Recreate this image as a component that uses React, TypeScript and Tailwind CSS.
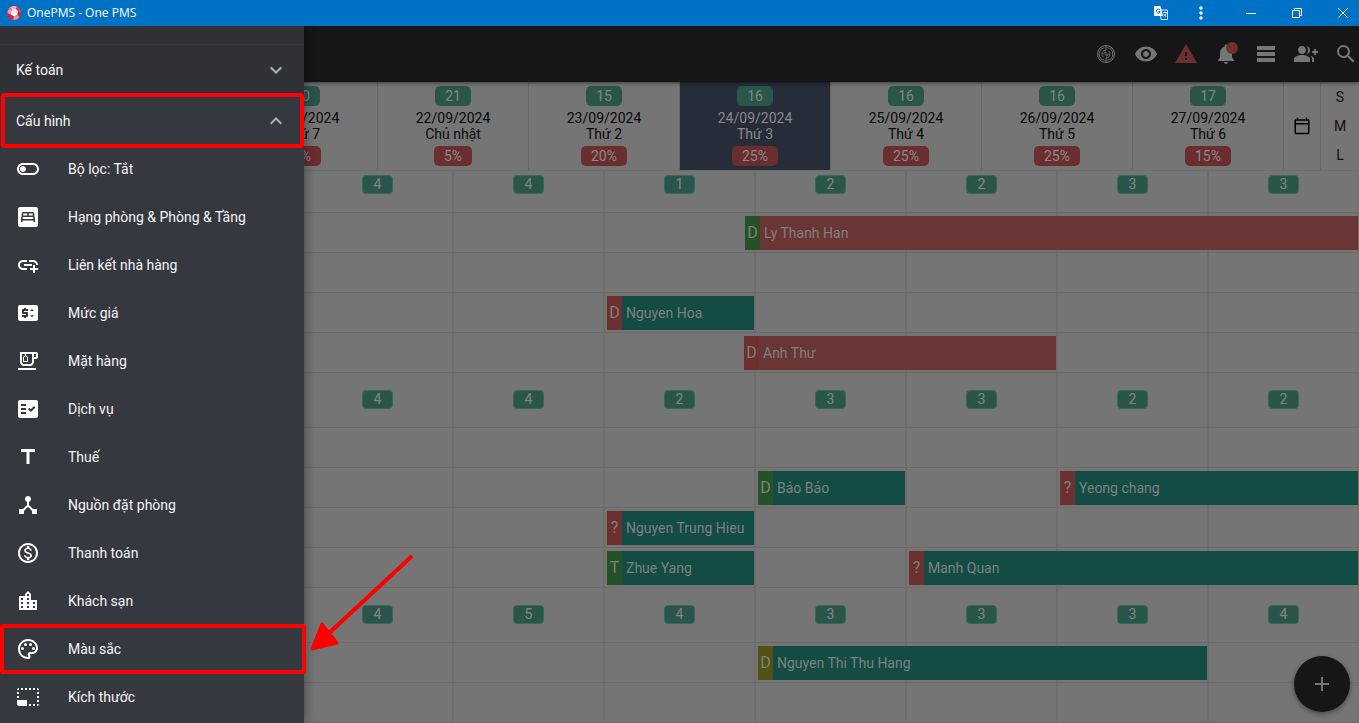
import { useState } from "react";
import type { IconType } from "react-icons";
import {
  MdAdd,
  MdAddLink,
  MdBedroomParent,
  MdDeviceHub,
  MdExpandLess,
  MdExpandMore,
  MdFactCheck,
  MdGroupAdd,
  MdLocationCity,
  MdMoreVert,
  MdNotifications,
  MdOutlineCalendarToday,
  MdOutlineEmojiFoodBeverage,
  MdOutlineMonetizationOn,
  MdOutlinePalette,
  MdOutlineToggleOff,
  MdPhotoSizeSelectSmall,
  MdPriceChange,
  MdSearch,
  MdTableRows,
  MdTitle,
  MdVisibility,
  MdWarning,
} from "react-icons/md";

type Day = { free: number; date: string; name: string; load: string; today?: boolean };

const days: Day[] = [
  { free: 20, date: "21/09/2024", name: "Thứ 7", load: "0%" },
  { free: 21, date: "22/09/2024", name: "Chủ nhật", load: "5%" },
  { free: 15, date: "23/09/2024", name: "Thứ 2", load: "20%" },
  { free: 16, date: "24/09/2024", name: "Thứ 3", load: "25%", today: true },
  { free: 16, date: "25/09/2024", name: "Thứ 4", load: "25%" },
  { free: 16, date: "26/09/2024", name: "Thứ 5", load: "25%" },
  { free: 17, date: "27/09/2024", name: "Thứ 6", load: "15%" },
];

type Booking = { guest: string; mark: string; markColor: string; color: string; place: string };

const RED = "bg-[#693535]";
const TEAL = "bg-[#124c45]";
const MARK_RED = "bg-[#6d2f2f]";
const MARK_GREEN = "bg-[#245226]";
const MARK_OLIVE = "bg-[#535212]";

const groups: { free: number[]; rooms: Booking[][] }[] = [
  {
    free: [4, 4, 1, 2, 2, 3, 3],
    rooms: [
      [{ guest: "Ly Thanh Han", mark: "D", markColor: MARK_GREEN, color: RED, place: "col-start-4 col-end-8 -ml-[11px] mr-0.5" }],
      [],
      [{ guest: "Nguyen Hoa", mark: "D", markColor: MARK_RED, color: TEAL, place: "col-start-3 col-end-4 ml-0.5 mr-0.5" }],
      [{ guest: "Anh Thư", mark: "D", markColor: MARK_RED, color: RED, place: "col-start-4 col-end-6 -ml-3 mr-0.5" }],
    ],
  },
  {
    free: [4, 4, 2, 3, 3, 2, 2],
    rooms: [
      [],
      [
        { guest: "Bảo Bảo", mark: "D", markColor: MARK_GREEN, color: TEAL, place: "col-start-4 col-end-5 ml-0.5 mr-0.5" },
        { guest: "Yeong chang", mark: "?", markColor: MARK_RED, color: TEAL, place: "col-start-6 col-end-8 ml-0.5 mr-0.5" },
      ],
      [{ guest: "Nguyen Trung Hieu", mark: "?", markColor: MARK_RED, color: TEAL, place: "col-start-3 col-end-4 ml-0.5 mr-0.5" }],
      [
        { guest: "Zhue Yang", mark: "T", markColor: MARK_GREEN, color: TEAL, place: "col-start-3 col-end-4 ml-0.5 mr-0.5" },
        { guest: "Manh Quan", mark: "?", markColor: MARK_RED, color: TEAL, place: "col-start-5 col-end-8 ml-0.5 mr-0.5" },
      ],
    ],
  },
  {
    free: [4, 5, 4, 3, 3, 3, 4],
    rooms: [
      [{ guest: "Nguyen Thi Thu Hang", mark: "D", markColor: MARK_OLIVE, color: TEAL, place: "col-start-4 col-end-7 ml-0.5 mr-0.5" }],
      [],
    ],
  },
];

const settings: { label: string; icon: IconType; marked?: boolean }[] = [
  { label: "Bộ lọc: Tắt", icon: MdOutlineToggleOff },
  { label: "Hạng phòng & Phòng & Tầng", icon: MdBedroomParent },
  { label: "Liên kết nhà hàng", icon: MdAddLink },
  { label: "Mức giá", icon: MdPriceChange },
  { label: "Mặt hàng", icon: MdOutlineEmojiFoodBeverage },
  { label: "Dịch vụ", icon: MdFactCheck },
  { label: "Thuế", icon: MdTitle },
  { label: "Nguồn đặt phòng", icon: MdDeviceHub },
  { label: "Thanh toán", icon: MdOutlineMonetizationOn },
  { label: "Khách sạn", icon: MdLocationCity },
  { label: "Màu sắc", icon: MdOutlinePalette, marked: true },
  { label: "Kích thước", icon: MdPhotoSizeSelectSmall },
];

function TitleBar() {
  return (
    <header className="flex h-[26px] shrink-0 items-center bg-[#0072c6] pl-[7px] text-white">
      <svg viewBox="0 0 14 14" className="size-3.5">
        <circle cx="7" cy="7" r="7" fill="#e8617a" />
        <path d="M3 1.200 7 0l3 .7L8.500 3 5 3.200z" fill="#f7b6c2" />
        <path d="M10 .7a7 7 0 0 1 3.500 4L11 5 8.500 3z" fill="#d23a55" />
        <path d="M5 3.200 8.500 3 11 5l-.5 4L7 10.500 3.500 8.500z" fill="#fdeef1" />
        <path d="M0 7l3.500 1.500L7 10.500 5 13.700A7 7 0 0 1 0 7z" fill="#cf2443" />
        <path d="M1 4 5 3.200 3.500 8.500 1.500 7.500z" fill="#f3a0b0" />
        <path d="M7 10.500 10.500 9l1.500 2.500A7 7 0 0 1 7 14z" fill="#f08ea0" />
        <path d="M11 5l3 1.500a7 7 0 0 1-1.500 4.500L10.500 9z" fill="#c4213e" />
      </svg>
      <h1 className="ml-1.5 flex-1 font-['Open_Sans','Noto_Sans',sans-serif] text-xs">OnePMS - One PMS</h1>
      <button aria-label="Dịch" className="flex w-8 justify-center">
        <svg viewBox="0 0 14 14" className="size-3.5">
          <path d="M6 4h7.500v9.500H7z" fill="#0072c6" stroke="#cfe3f5" />
          <path d="M0 0h6.500L9 10H1a1 1 0 0 1-1-1z" fill="#fff" />
          <path d="M5.800 3.800A2 2 0 1 0 6.200 5.500H4.300" fill="none" stroke="#0072c6" />
          <path d="M9 6.500h4M11 5.500v1M12.300 6.500c-.3 1.800-1.300 3-2.800 4M9.800 8c.6 1.200 1.500 2 2.700 2.700" fill="none" stroke="#fff" strokeWidth=".8" />
        </svg>
      </button>
      <button aria-label="Thêm" className="ml-2 flex w-8 justify-center">
        <MdMoreVert className="size-5" />
      </button>
      <div className="ml-[18px] flex gap-3.5">
        <button aria-label="Thu nhỏ" className="flex w-8 justify-center">
          <svg viewBox="0 0 10 10" className="size-2.5" stroke="#fff">
            <path d="M0 5.500h10" />
          </svg>
        </button>
        <button aria-label="Khôi phục" className="flex w-8 justify-center">
          <svg viewBox="0 0 10 10" className="size-2.5" fill="none" stroke="#fff">
            <path d="M.5 2.500h7v7h-7zM2.500 2.500v-2h7v7h-2" />
          </svg>
        </button>
        <button aria-label="Đóng" className="flex w-8 justify-center">
          <svg viewBox="0 0 10 10" className="size-2.5" stroke="#fff">
            <path d="M0 0l10 10M10 0 0 10" />
          </svg>
        </button>
      </div>
    </header>
  );
}

function TouchIcon() {
  return (
    <svg viewBox="0 0 24 24" className="size-6" fill="none" stroke="currentColor">
      <circle cx="12" cy="12" r="8.500" />
      <path d="M10.500 5.700a6.400 6.400 0 0 0 0 12.600M13.500 5.700a6.400 6.400 0 0 1 0 12.600" />
      <path d="M12 3.500V8M12 16v4.500" />
      <path d="M12 8a4 4 0 0 0-2.500 7.200M12 16a4 4 0 0 0 2.500-7.200" />
      <path d="M10 12.500a2 2 0 0 1 2-2.500v4a2 2 0 0 0 2-2.500" />
    </svg>
  );
}

function Toolbar() {
  return (
    <nav className="z-10 flex h-14 shrink-0 items-center justify-end gap-4 bg-[#161619] pr-px text-[#767677] shadow-[0_1px_4px_rgba(0,0,0,0.5)]">
      <button aria-label="Cảm ứng"><TouchIcon /></button>
      <button aria-label="Hiển thị"><MdVisibility className="size-6" /></button>
      <button aria-label="Cảnh báo"><MdWarning className="size-6 text-[#6d3030]" /></button>
      <button aria-label="Thông báo" className="relative">
        <MdNotifications className="size-6" />
        <span className="absolute top-0 right-0 size-3 rounded-full bg-[#6d3030]" />
      </button>
      <button aria-label="Danh sách"><MdTableRows className="size-6" /></button>
      <button aria-label="Thêm khách"><MdGroupAdd className="size-6" /></button>
      <button aria-label="Tìm kiếm"><MdSearch className="size-6" /></button>
    </nav>
  );
}

function DayHeader() {
  return (
    <div className="flex shrink-0 pl-[227px]">
      <div className="grid flex-1 grid-cols-7">
        {days.map((day) => (
          <div
            key={day.date}
            className={`flex h-[88px] flex-col items-center border-r border-[#666] py-1 leading-4 ${day.today ? "bg-[#262c38] text-[#8a8a8a]" : "text-[#080808]"}`}
          >
            <span className="rounded-[5px] bg-[#2a564a] px-2.5 leading-5 text-[#858585]">{day.free}</span>
            <span className="mt-1">{day.date}</span>
            <span>{day.name}</span>
            <span className="mt-1 rounded-[5px] bg-[#6b2e2e] px-2.5 leading-5 text-[#8a8a8a]">{day.load}</span>
          </div>
        ))}
      </div>
      <button aria-label="Chọn ngày" className="flex w-[37px] items-center justify-center border-r border-[#666] text-black">
        <MdOutlineCalendarToday className="size-[18px]" />
      </button>
      <div className="flex w-[38px] flex-col text-[#111]">
        <button className="flex-1">S</button>
        <button className="flex-1">M</button>
        <button className="flex-1">L</button>
      </div>
    </div>
  );
}

const ROW = "grid grid-cols-7 border-b border-[#6a6a6a]";

function BookingBar({ booking }: { booking: Booking }) {
  return (
    <button className={`z-[1] row-start-1 mt-[3px] flex h-[34px] text-left leading-[34px] text-[#808080] ${booking.color} ${booking.place}`}>
      <span className={`w-[15px] shrink-0 text-center text-base leading-[34px] ${booking.markColor}`}>{booking.mark}</span>
      <span className="ml-1 whitespace-nowrap">{booking.guest}</span>
    </button>
  );
}

function Board() {
  return (
    <div className="-mr-px min-h-0 flex-1 overflow-hidden border-t border-[#6d6d6d] pl-[303px]">
      {groups.map((group, g) => (
        <section key={g}>
          {/* the first group is scrolled partly under the day header */}
          <div className={`${ROW} ${g === 0 ? "h-[42px]" : "h-[55px]"}`}>
            {group.free.map((free, i) => (
              <div key={i} className="flex items-end justify-center border-r-2 border-[#6d6d6d]">
                <span className="mb-[18px] h-[19px] w-[31px] rounded border border-[#37695b] bg-[#2a564a] text-center leading-4 text-[#858585]">
                  {free}
                </span>
              </div>
            ))}
          </div>
          {group.rooms.map((bookings, r) => (
            <div key={r} className={`${ROW} h-10`}>
              {days.map((day, i) => (
                <div key={day.date} className="row-start-1 border-r-2 border-[#6d6d6d]" style={{ gridColumnStart: i + 1 }} />
              ))}
              {bookings.map((booking) => (
                <BookingBar key={booking.guest} booking={booking} />
              ))}
            </div>
          ))}
        </section>
      ))}
    </div>
  );
}

function Drawer() {
  const [open, setOpen] = useState(true);

  return (
    <aside className="absolute inset-y-0 left-0 z-20 w-[304px] bg-[#363840] text-[#f5f5f5] shadow-[2px_0_10px_rgba(0,0,0,0.35)]">
      <div className="bg-[#303136] pt-[18px] pb-0.5">
        <button className="flex h-[50px] w-full items-center border-t border-[#36373c] px-4">
          <span className="flex-1 text-left">Kế toán</span>
          <MdExpandMore className="size-6 text-[#a9b3b6]" />
        </button>
      </div>
      <button onClick={() => setOpen(!open)} aria-expanded={open} className="relative flex h-[49px] w-full items-center px-4">
        <span className="flex-1 text-left">Cấu hình</span>
        <MdExpandLess className="size-6 text-[#a9b3b6]" />
        <span className="absolute -inset-y-[3px] right-0 left-px rounded-[3px] border-4 border-[#fe0000]" />
      </button>
      {open && (
        <ul>
          {settings.map(({ label, icon: Icon, marked }) => (
            <li key={label} className="relative">
              <a href="#" className="flex h-12 items-center gap-7 px-4">
                <Icon className="size-6 text-white" />
                {label}
              </a>
              {marked && <span className="absolute -inset-y-px -right-0.5 left-0 rounded-[3px] border-4 border-[#fe0000]" />}
            </li>
          ))}
        </ul>
      )}
    </aside>
  );
}

export default function App() {
  return (
    <div className="flex h-screen flex-col overflow-hidden bg-[#757575] font-['Roboto',sans-serif] text-sm">
      <TitleBar />
      <main className="relative flex min-h-0 flex-1 flex-col overflow-hidden">
        <Toolbar />
        <DayHeader />
        <Board />
        <Drawer />
        <svg viewBox="0 0 110 102" className="absolute top-[526px] left-[307px] z-30 h-[102px] w-[110px]" fill="#fe0000" stroke="#fe0000" strokeLinecap="round" strokeLinejoin="round">
          <path d="M104 5 20 83" strokeWidth="4" />
          <path d="M5 97 15 72 30 91z" strokeWidth="3" />
        </svg>
        <button aria-label="Thêm đặt phòng" className="absolute right-[9px] bottom-[11px] z-10 flex size-14 items-center justify-center rounded-full bg-[#161619] text-[#767677] shadow-[0_2px_5px_rgba(0,0,0,0.4)]">
          <MdAdd className="size-6" />
        </button>
      </main>
    </div>
  );
}
